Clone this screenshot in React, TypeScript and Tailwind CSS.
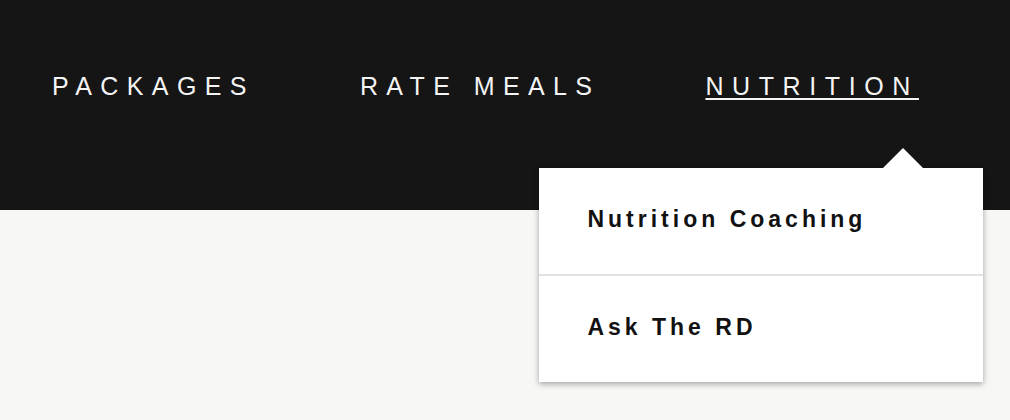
import React from "react";

const navItems = ["PACKAGES", "RATE MEALS", "NUTRITION"];

export default function App() {
  return (
    <div className="min-h-[420px] bg-[#f7f7f5] font-['Liberation_Sans',Arial,sans-serif]">
      {/* Header */}
      <header className="h-[210px] bg-[#151515]">
        <nav className="flex gap-[105px] pl-[52px] pt-[74px]">
          {navItems.map((item) => {
            const active = item === "NUTRITION";
            return (
              <div key={item} className="relative">
                <a
                  href="#"
                  className={
                    active
                      ? "block text-[25px] leading-[25px] tracking-[8.6px] text-[#f4f4f4] underline decoration-2 underline-offset-[3px]"
                      : "block text-[25px] leading-[25px] tracking-[8.4px] text-[#f4f4f4]"
                  }
                >
                  {item}
                </a>
                {active && <Dropdown />}
              </div>
            );
          })}
        </nav>
      </header>
    </div>
  );
}

function Dropdown() {
  return (
    <div className="absolute left-[-166px] top-[94px] z-10 w-[444px] bg-white shadow-[0_2px_6px_rgba(0,0,0,0.35)]">
      {/* arrow */}
      <div className="absolute right-[80px] top-[-20px] h-0 w-0 translate-x-1/2 border-x-[20px] border-b-[20px] border-x-transparent border-b-white" />
      <a href="#" className="flex h-[106px] items-center pb-[3px] pl-[48px] text-[23px] font-bold tracking-[4px] text-[#111]">
        Nutrition Coaching
      </a>
      <div className="h-[2px] bg-[#e2e2e2]" />
      <a href="#" className="flex h-[106px] items-center pb-[3px] pl-[48px] text-[23px] font-bold tracking-[4px] text-[#111]">
        Ask The RD
      </a>
    </div>
  );
}
